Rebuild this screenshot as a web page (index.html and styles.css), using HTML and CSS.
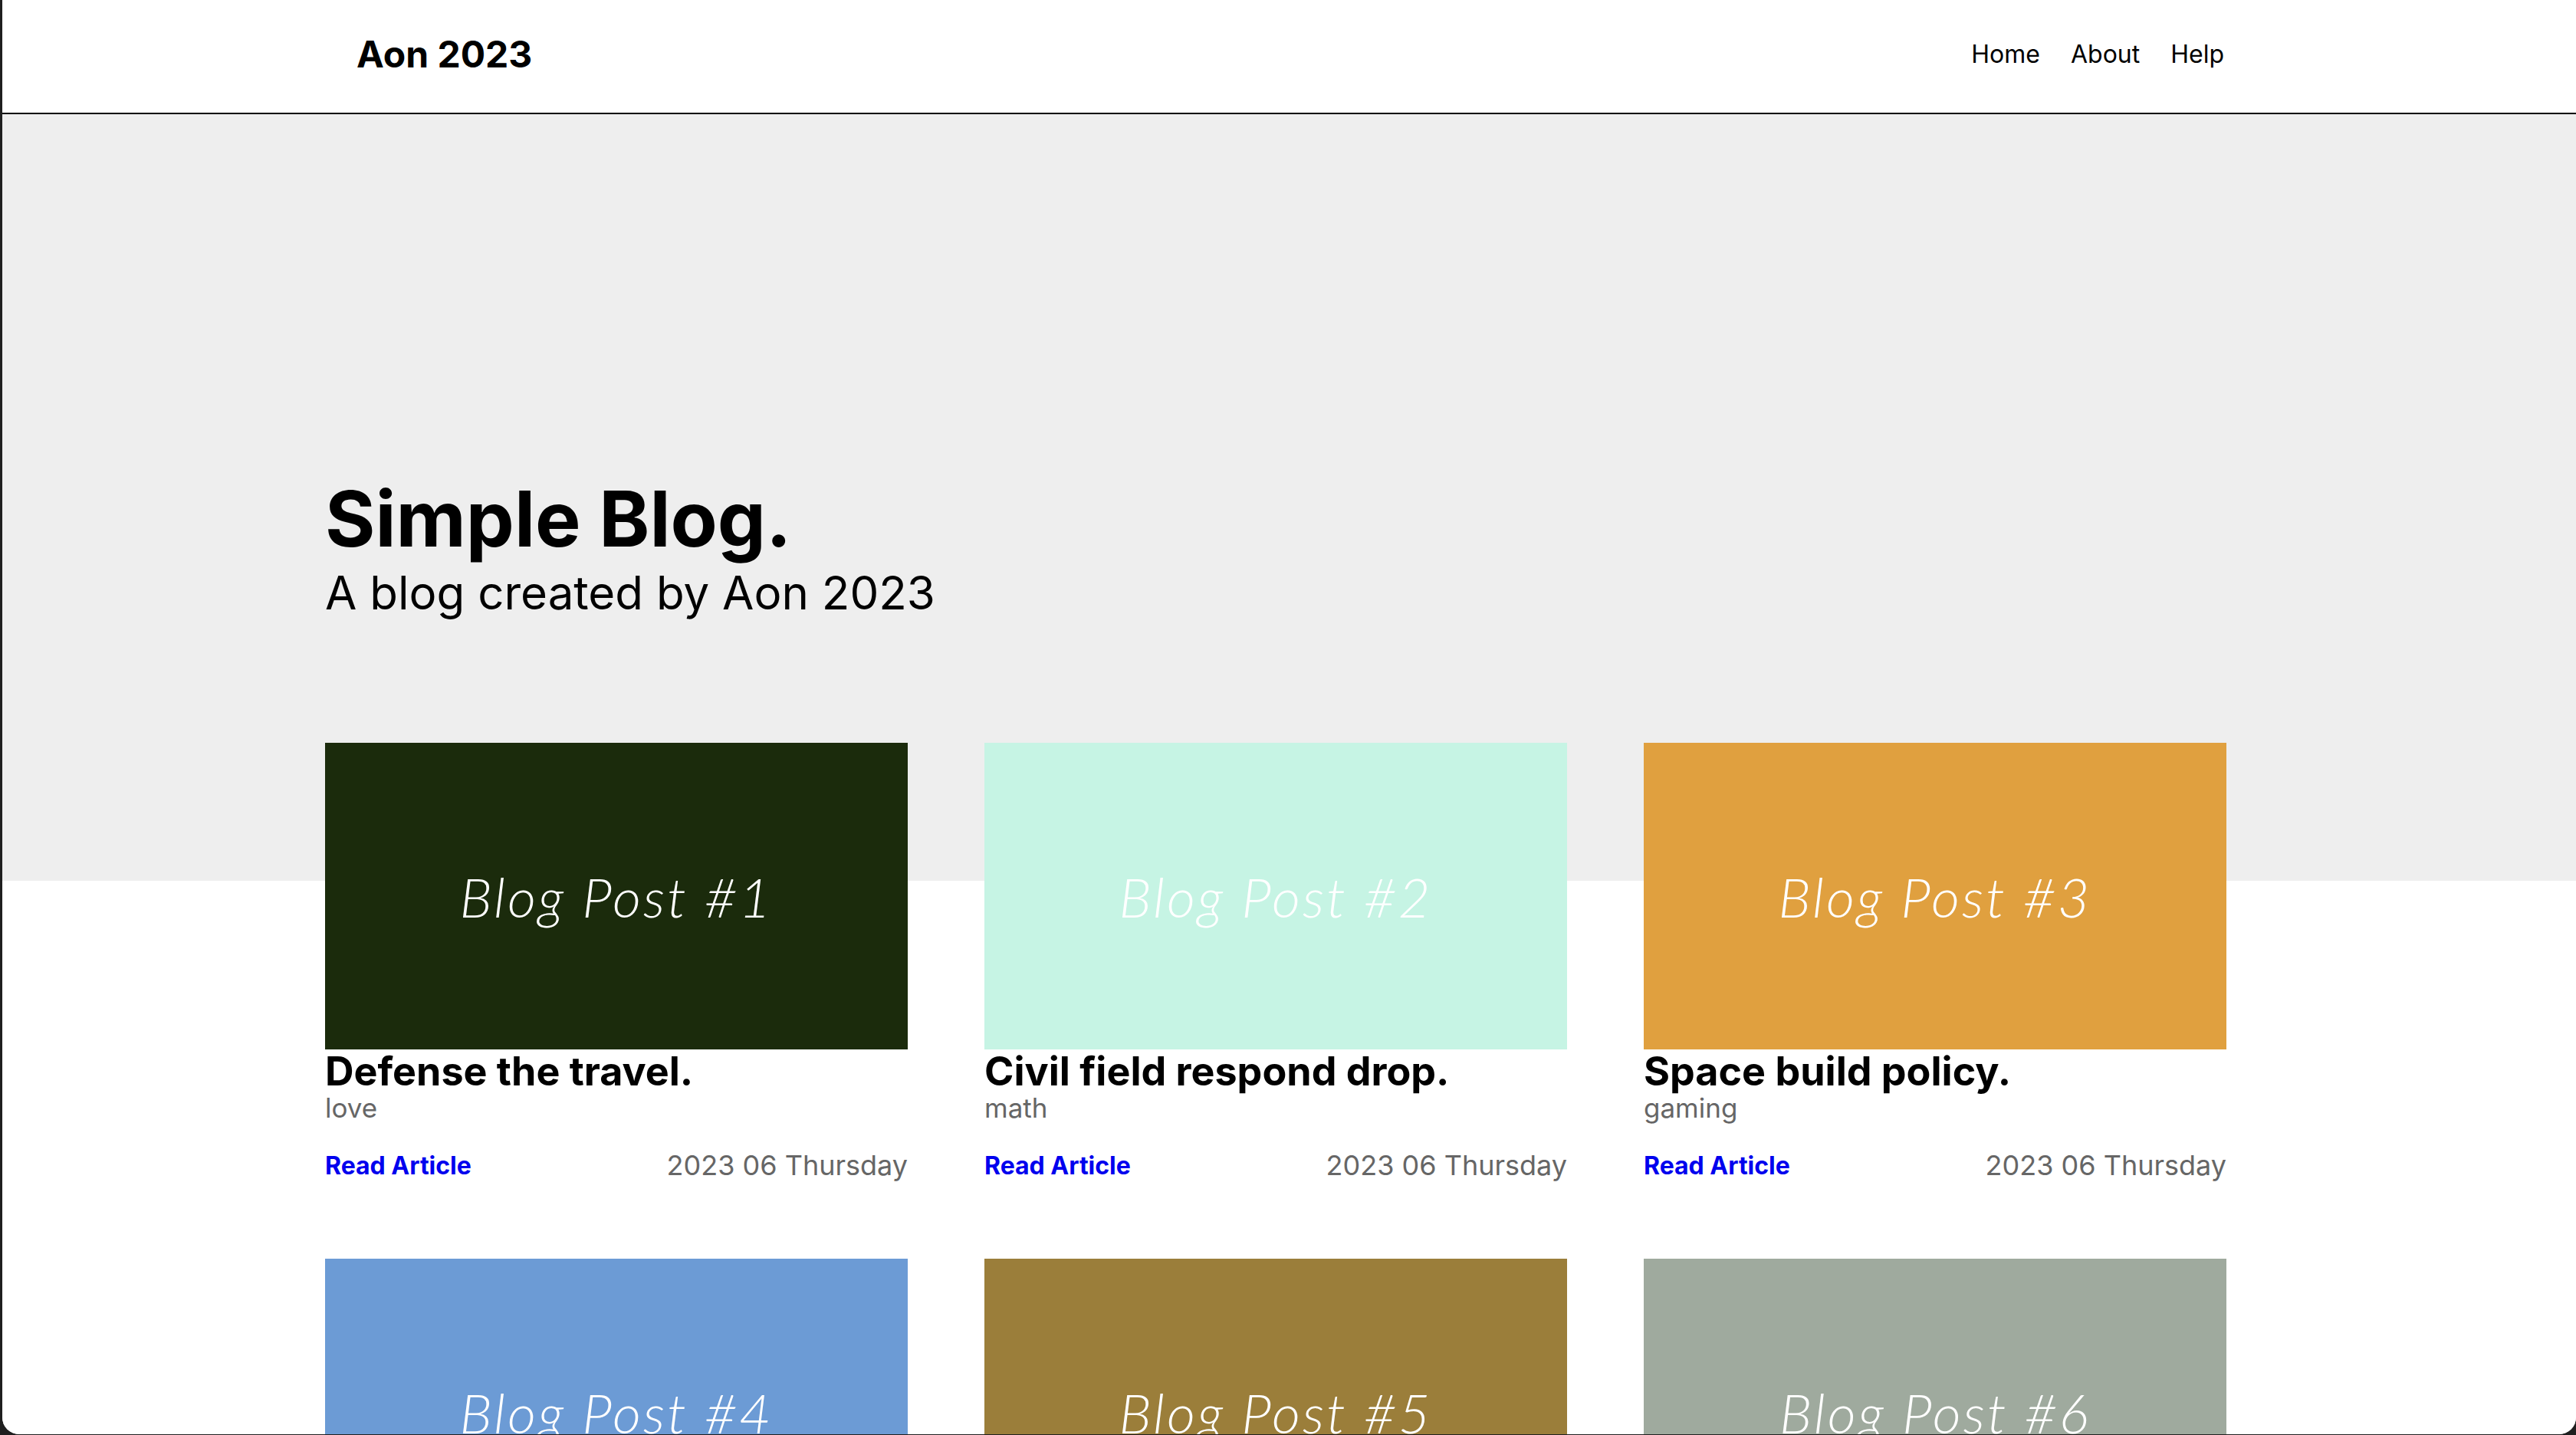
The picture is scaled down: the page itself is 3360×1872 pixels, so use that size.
FILE: index.html
```html
<!DOCTYPE html>
<html lang="en">
<head>
<meta charset="utf-8">
<title>Simple Blog.</title>
<link rel="stylesheet" href="styles.css">
</head>
<body>
<div class="window">
  <header class="site-header">
    <div class="container header-inner">
      <a class="logo" href="#">Aon 2023</a>
      <nav class="nav">
        <a href="#">Home</a>
        <a href="#">About</a>
        <a href="#">Help</a>
      </nav>
    </div>
  </header>
  <main class="main">
    <div class="container">
      <section class="hero">
        <h1 class="hero-title">Simple Blog.</h1>
        <p class="hero-sub">A blog created by Aon 2023</p>
      </section>
      <section class="posts">
        <article class="card">
          <div class="thumb c1"><span>Blog Post #1</span></div>
          <h2 class="card-title">Defense the travel.</h2>
          <div class="card-cat">love</div>
          <div class="card-foot"><a href="#" class="read">Read Article</a><span class="date">2023 06 Thursday</span></div>
        </article>
        <article class="card">
          <div class="thumb c2"><span>Blog Post #2</span></div>
          <h2 class="card-title">Civil field respond drop.</h2>
          <div class="card-cat">math</div>
          <div class="card-foot"><a href="#" class="read">Read Article</a><span class="date">2023 06 Thursday</span></div>
        </article>
        <article class="card">
          <div class="thumb c3"><span>Blog Post #3</span></div>
          <h2 class="card-title">Space build policy.</h2>
          <div class="card-cat">gaming</div>
          <div class="card-foot"><a href="#" class="read">Read Article</a><span class="date">2023 06 Thursday</span></div>
        </article>
        <article class="card">
          <div class="thumb c4"><span>Blog Post #4</span></div>
          <h2 class="card-title">Shoulder pick answer.</h2>
          <div class="card-cat">travel</div>
          <div class="card-foot"><a href="#" class="read">Read Article</a><span class="date">2023 06 Thursday</span></div>
        </article>
        <article class="card">
          <div class="thumb c5"><span>Blog Post #5</span></div>
          <h2 class="card-title">Money nation guess.</h2>
          <div class="card-cat">music</div>
          <div class="card-foot"><a href="#" class="read">Read Article</a><span class="date">2023 06 Thursday</span></div>
        </article>
        <article class="card">
          <div class="thumb c6"><span>Blog Post #6</span></div>
          <h2 class="card-title">Rather piece thought.</h2>
          <div class="card-cat">food</div>
          <div class="card-foot"><a href="#" class="read">Read Article</a><span class="date">2023 06 Thursday</span></div>
        </article>
      </section>
    </div>
  </main>
</div>
</body>
</html>
```
FILE: styles.css
```css
html, body {
  margin: 0;
  padding: 0;
  height: 100%;
  overflow: hidden;
}
body {
  background: #1f1f1f;
  font-family: Inter, "Liberation Sans", sans-serif;
  color: #000;
}
.window {
  margin-left: 3px;
  height: 1871px;
  background: #fff;
  border-radius: 0 0 22px 22px;
  overflow: hidden;
}
.container {
  width: 2480px;
  margin-left: calc((100% - 2480px - 35px) / 2);
}
.site-header {
  height: 140px;
  padding-bottom: 7px;
  border-bottom: 2px solid #000;
  background: #fff;
}
.header-inner {
  height: 100%;
  display: flex;
  align-items: center;
  justify-content: space-between;
}
.logo {
  padding-left: 41px;
  font-size: 48px;
  font-weight: 700;
  color: #000;
  text-decoration: none;
}
.nav {
  display: flex;
  gap: 40px;
  padding-right: 3px;
}
.nav a {
  font-size: 32px;
  color: #000;
  text-decoration: none;
}
.main {
  background: linear-gradient(#eeeeee 0, #eeeeee 1000px, #ffffff 1000px);
  padding-top: 467px;
}
.hero-title {
  margin: 0;
  font-size: 100px;
  font-weight: 700;
  line-height: normal;
}
.hero-sub {
  margin: 0;
  font-size: 60px;
  font-weight: 400;
  line-height: normal;
}
.posts {
  margin-top: 160px;
  display: grid;
  grid-template-columns: repeat(3, 760px);
  column-gap: 100px;
  row-gap: 100px;
}
.thumb {
  height: 400px;
  display: flex;
  align-items: center;
  justify-content: center;
}
.thumb span {
  font-family: Lato, "DejaVu Sans", sans-serif;
  font-style: italic;
  font-weight: 300;
  font-size: 72px;
  letter-spacing: 3px;
  color: #fff;
}
.c1 { background: #1b2b0c; }
.c2 { background: #c6f4e4; }
.c3 { background: #e0a03f; }
.c4 { background: #6c9bd5; }
.c5 { background: #9b7e3a; }
.c6 { background: #9faa9e; }
.card-title {
  margin: 3px 0 0;
  font-size: 52px;
  font-weight: 700;
  line-height: 52px;
}
.card-cat {
  font-size: 35px;
  color: #666;
  line-height: normal;
}
.card-foot {
  margin-top: 32px;
  display: flex;
  justify-content: space-between;
  align-items: center;
}
.read {
  font-size: 32px;
  font-weight: 700;
  color: #0000ee;
  text-decoration: none;
}
.date {
  font-size: 36px;
  color: #666;
}
```
